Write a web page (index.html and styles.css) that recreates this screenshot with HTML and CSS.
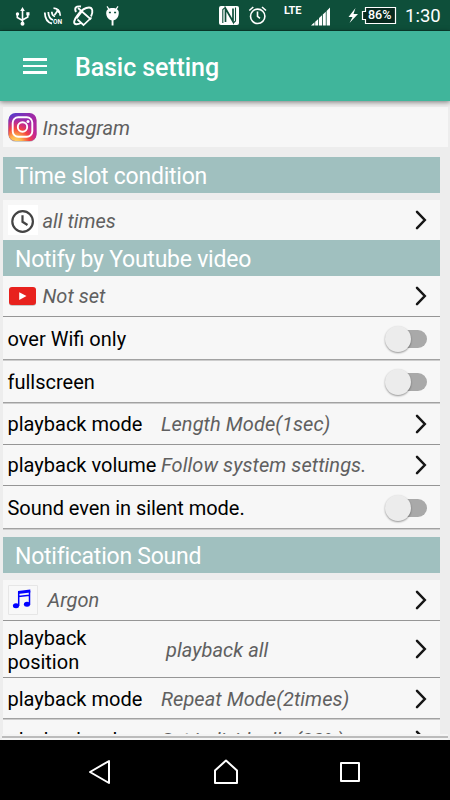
FILE: index.html
```html
<!DOCTYPE html>
<html lang="en">
<head>
<meta charset="utf-8">
<title>Basic setting</title>
<link rel="stylesheet" href="styles.css">
</head>
<body>
<svg class="defs" width="0" height="0">
  <symbol id="chev" viewBox="0 0 12 20"><path d="M2 1.800 9.800 10 2 18.200" fill="none" stroke="#161616" stroke-width="2.500" stroke-linecap="round"/></symbol>
</svg>
<div class="phone">
  <div class="status">
    <svg width="450" height="31" viewBox="0 0 450 31" fill="none" stroke="#fff">
      <g stroke-width="1.600"><path d="M22.500 9v15M17.300 14v3.500l5.200 3M27.800 14v3l-5.300 3"/></g>
      <g fill="#fff" stroke="none"><path d="M22.500 7l2.300 4h-4.600z"/><circle cx="22.500" cy="23.800" r="2"/><circle cx="17.500" cy="14" r="1.700"/><path d="M26.300 12.200h3.200v3.200h-3.200z"/></g>
      <path d="M44.800 12.500c.2 6 2.700 10 7.200 11M48.300 12c.2 4.500 1.700 7 4.700 8M51.800 11.800c.2 2.700 1.200 4.200 3.200 4.700M54.500 15l3-4" stroke-width="1.800"/>
      <path d="M53.500 8.200c4 .3 6.500 3 6.800 7.500" stroke-width="1.700"/>
      <path d="M57 9.500l2.500 3" stroke-width="2"/>
      <path d="M81 6.500c-5-.8-7 1.500-5 5.500M91 16.500c2.500-5 1.500-9-2-9-3.500 0-7 2-11 7-4 5-5.500 9.700-1.500 9.700 1.500 0 3-.4 4.500-1.200" stroke-width="1.900"/>
      <path d="M78 8l13 11.500M77.500 19.500l6 5.500 8-7.500M81.500 12l-5 6.500" stroke-width="1.700"/>
      <g fill="#fff" stroke="none"><path d="M106.200 13c0-3.500 2.500-5 6.300-5s6.300 1.500 6.300 5-2.300 7.500-6.300 7.500-6.300-4-6.300-7.500z"/><path d="M111.600 20h1.900v5.500h-1.900z"/></g>
      <path d="M107 6.300l2 3M118 6.300l-2 3" stroke-width="1.200"/>
      <path d="M108.900 12.500h2M114.100 12.500h2" stroke="#0e4f3a" stroke-width="1.600"/>
      <rect x="219" y="6" width="20" height="19" rx="2" fill="#fff" stroke="none"/>
      <path d="M222.800 23V9.500l2.200-1.800M235.500 7.500V21l-2.200 2" stroke="#0e4f3a" stroke-width="1.100"/>
      <path d="M225.500 22V8.500l7.500 13V8.500" stroke="#0e4f3a" stroke-width="1.700"/>
      <g stroke-width="1.600"><circle cx="257.700" cy="16.300" r="7.200"/><path d="M257.500 11.500v4.800l2.500 2M249.300 10.500l4-3.500M262 7l4 3.500"/></g>
      <path d="M311 25.500l3.500-3.200v3.200zM315.200 21.700l3-2.700v6.500h-3zM319 18l3-2.700v10.200h-3zM322.800 14.500l3-2.800v13.800h-3zM326.600 11l3.400-3.500v18h-3.400z" fill="#fff" stroke="none"/>
      <path d="M355.500 8l-7 9h4l-3 6 8.500-9h-4.500z" fill="#fff" stroke="none"/>
      <path d="M365.500 7.500h30v16h-30v-4h-3v-8h3z" stroke-width="1.200" fill="#08291e"/>
    </svg>
    <span class="on">ON</span><span class="lte">LTE</span><span class="batt">86%</span><span class="clock">1:30</span>
  </div>
  <header class="appbar">
    <span class="burger"><i></i><i></i><i></i></span>
    <h1>Basic setting</h1>
  </header>
  <main class="content">
    <div class="row app">
      <svg class="ico" width="30" height="30" viewBox="0 0 30 30">
        <defs>
          <radialGradient id="warm" cx=".25" cy="1.05" r="1"><stop offset="0" stop-color="#ffd76a"/><stop offset=".22" stop-color="#fdb54c"/><stop offset=".5" stop-color="#f5433f"/><stop offset=".72" stop-color="#d02a86" stop-opacity=".8"/><stop offset="1" stop-color="#a02ab0" stop-opacity="0"/></radialGradient>
          <linearGradient id="cool" x1="0" y1="0" x2="1" y2=".4"><stop offset="0" stop-color="#4b3fd0"/><stop offset="1" stop-color="#b5239c"/></linearGradient>
        </defs>
        <rect x=".5" y="1.800" width="28" height="28" rx="7" fill="#bbb"/>
        <rect x=".5" y="1" width="28" height="28" rx="7" fill="url(#cool)"/>
        <rect x=".5" y="1" width="28" height="28" rx="7" fill="url(#warm)"/>
        <g fill="none" stroke="#fff" stroke-width="1.900"><rect x="4.700" y="5.200" width="19.600" height="19.600" rx="5.500"/><circle cx="14.500" cy="15" r="4.700"/></g>
        <circle cx="20" cy="9.500" r="1.500" fill="#fff"/>
      </svg>
      <em>Instagram</em>
    </div>
    <h2 class="h-time">Time slot condition</h2>
    <div class="row time">
      <svg class="ico white" width="30" height="30" viewBox="0 0 30 30" fill="none" stroke="#444" stroke-width="2.200"><circle cx="14.600" cy="16.500" r="10.300"/><path d="M14.500 10.300v6.500l5 3.200"/></svg>
      <em>all times</em><svg class="chev"><use href="#chev"/></svg>
    </div>
    <h2>Notify by Youtube video</h2>
    <div class="row line r41">
      <svg class="ico" width="30" height="30" viewBox="0 0 30 30"><rect x="1" y="6.800" width="27" height="18" rx="3" fill="#bbb"/><rect x="1" y="6" width="27" height="18" rx="3" fill="#e8211d"/><path d="M11.200 11.200l7.300 3.900-7.300 3.900z" fill="#fff"/></svg>
      <em>Not set</em><svg class="chev"><use href="#chev"/></svg>
    </div>
    <div class="row line soft r44"><span>over Wifi only</span><b class="switch"></b></div>
    <div class="row line soft r43"><span>fullscreen</span><b class="switch"></b></div>
    <div class="row line r41"><span class="label">playback mode</span><em class="length">Length Mode(1sec)</em><svg class="chev"><use href="#chev"/></svg></div>
    <div class="row line r41"><span class="label">playback volume</span><em class="length">Follow system settings.</em><svg class="chev"><use href="#chev"/></svg></div>
    <div class="row line soft r44"><span class="silent">Sound even in silent mode.</span><b class="switch"></b></div>
    <h2 class="h-sound">Notification Sound</h2>
    <div class="row line r41">
      <svg class="ico note" width="30" height="30" viewBox="0 0 30 30"><path d="M.5.500h29v29H.5z" fill="#f8f8f8" stroke="#e6e6e6"/><path d="M10 6l12.300-1.500v3L10 9z" fill="#00f"/><path d="M10.700 21V7M21.500 19.500V6M10.500 11.500l11-1.300" stroke="#00f" stroke-width="1.500" fill="none"/><ellipse cx="8" cy="20.700" rx="3.100" ry="2.500" fill="#00f"/><ellipse cx="19" cy="19.300" rx="3.100" ry="2.500" fill="#00f"/></svg>
      <em>Argon</em><svg class="chev"><use href="#chev"/></svg>
    </div>
    <div class="row line r57 pos"><span class="label wide">playback position</span><em class="length">playback all</em><svg class="chev"><use href="#chev"/></svg></div>
    <div class="row line soft r42"><span class="label">playback mode</span><em class="length">Repeat Mode(2times)</em><svg class="chev"><use href="#chev"/></svg></div>
    <div class="clip"><div class="row last"><span class="label">playback volume</span><em>Set individually (80%)</em><svg class="chev"><use href="#chev"/></svg></div></div>
  </main>
  <div class="bottom"></div>
  <nav>
    <svg width="24" height="26" viewBox="0 0 24 26"><path d="M21 2v22L2 13z"/></svg>
    <svg width="26" height="28" viewBox="0 0 26 28"><path d="M2 12.500L13 2.500l11 10V25H2z"/></svg>
    <svg width="22" height="22" viewBox="0 0 22 22"><path d="M2 2h18v18H2z"/></svg>
  </nav>
</div>
</body>
</html>
```
FILE: styles.css
```css
* { box-sizing: border-box; }
body { margin: 0; font-family: Roboto, sans-serif; background: #000; }
.defs { position: absolute; }
.phone { width: 450px; height: 800px; display: flex; flex-direction: column; overflow: hidden; background: #ededed; }
.status { height: 31px; flex: none; position: relative; background: #0e4f3a; border-bottom: 1px solid #0a3f2e; color: #fff; }
.status svg { display: block; }
.status span { position: absolute; line-height: 1; white-space: nowrap; }
.on { left: 53px; top: 18.500px; font-size: 6.500px; font-weight: 700; }
.lte { left: 284px; top: 5px; font-size: 11px; font-weight: 700; letter-spacing: -.2px; }
.batt { left: 368px; top: 9px; font-size: 12.500px; font-weight: 500; }
.clock { left: 405px; top: 7px; font-size: 18.500px; }
.appbar { height: 70px; flex: none; display: flex; align-items: center; padding-left: 23px; background: #40b59b; box-shadow: 0 1px 5px rgba(0,0,0,.5); z-index: 1; }
.burger { width: 24px; display: grid; gap: 4px; }
.burger i { height: 2.500px; background: #fff; }
h1 { margin: 3px 0 0 28px; font-size: 25px; letter-spacing: -.09px; font-weight: 500; line-height: 30px; color: #fff; white-space: nowrap; }
.content { height: 633px; flex: none; padding: 6px 10px 0 2.500px; overflow: hidden; }
.row { display: flex; align-items: center; height: 40px; padding-left: 5px; background: #f7f7f7; font-size: 20px; line-height: 24px; color: #000; white-space: nowrap; }
.row em { color: #606060; }
.app em, .time em { padding-top: 2px; }
.pos span, .pos em { padding-top: 2px; }
.app { margin-right: -8px; }
.line { border-bottom: 1px solid #969696; }
.soft { border-bottom-color: #cdcdcd; box-shadow: inset 0 -1px #a2a2a2; }
.r41 { height: 41px; }
.r42 { height: 42px; }
.r43 { height: 43px; }
.r44 { height: 44px; }
.r57 { height: 57px; }
.last { height: 39px; }
h2 { margin: 0; height: 36px; padding: 1px 0 0 12.500px; background: #a0c0bf; color: #fff; font-size: 23px; letter-spacing: -.24px; font-weight: 400; line-height: 37px; white-space: nowrap; }
.h-time { margin: 10px 0 7px; }
.h-sound { margin: 7px 0 7px; }
.ico { flex: none; margin-right: 5px; }
.white { background: #fff; }
.note { margin-right: 10px; }
.label { width: 153.500px; }
.wide { width: 158.500px; white-space: normal; padding-right: 50px; }
.length { letter-spacing: .07px; }
.silent { letter-spacing: -.05px; }
.chev { width: 12px; height: 20px; margin: 0 13.500px 0 auto; }
.switch { position: relative; width: 38px; height: 18px; margin: 0 13px 0 auto; border-radius: 9px; background: #a9a9a9; }
.switch::before { content: ""; position: absolute; left: -4px; top: -4px; width: 26px; height: 26px; border-radius: 50%; background: #ececec; box-shadow: 0 1px 2px rgba(0,0,0,.4); }
.clip { height: 14px; overflow: hidden; }
.bottom { height: 6px; flex: none; margin: 0 2px; border-top: 2px solid #f4f4f4; background: linear-gradient(#bbb 2px, #f4f4f4 2px); }
nav { height: 60px; flex: none; margin-top: auto; padding: 4px 89px 0 88px; background: #000; display: flex; align-items: center; justify-content: space-between; }
nav svg { fill: none; stroke: #fff; stroke-width: 2; stroke-linejoin: round; }
```
